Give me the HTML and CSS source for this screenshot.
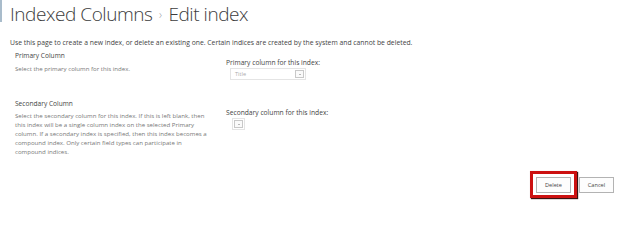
FILE: index.html
```html
<!DOCTYPE html>
<html lang="en">
<head>
<meta charset="utf-8">
<title>Indexed Columns - Edit index</title>
<link rel="stylesheet" href="styles.css">
</head>
<body>
<div class="page">
  <header class="header">
    <h1 class="title">Indexed Columns <span class="sep">›</span> Edit index</h1>
  </header>
  <main class="content">
    <p class="intro">Use this page to create a new index, or delete an existing one. Certain indices are created by the system and cannot be deleted.</p>

    <section class="row row-primary">
      <div class="info">
        <h2 class="info-title">Primary Column</h2>
        <p class="info-desc">Select the primary column for this index.</p>
      </div>
      <div class="field">
        <label class="field-label">Primary column for this index:</label>
        <div class="select select-wide">
          <span class="select-value">Title</span>
          <span class="select-arrow"><span class="tri"></span></span>
        </div>
      </div>
    </section>

    <section class="row row-secondary">
      <div class="info">
        <h2 class="info-title">Secondary Column</h2>
        <p class="info-desc">Select the secondary column for this index. If this is left blank, then this index will be a single column index on the selected Primary column. If a secondary index is specified, then this index becomes a compound index. Only certain field types can participate in compound indices.</p>
      </div>
      <div class="field">
        <label class="field-label">Secondary column for this index:</label>
        <div class="select select-small">
          <span class="select-arrow"><span class="tri"></span></span>
        </div>
      </div>
    </section>

    <div class="actions">
      <span class="highlight"><button class="btn">Delete</button></span>
      <button class="btn">Cancel</button>
    </div>
  </main>
</div>
</body>
</html>
```
FILE: styles.css
```css
* { box-sizing: border-box; }
html, body { margin: 0; padding: 0; background: #fff; }
body {
  font-family: "Open Sans", "Noto Sans", "DejaVu Sans", sans-serif;
  color: #444;
  width: 624px;
  height: 213px;
  overflow: hidden;
}
.page { width: 624px; }

.header {
  height: 22px;
  border-left: 2px solid #a9bccb;
  padding-left: 8px;
}
.title {
  margin: 0;
  padding-top: 2px;
  font-size: 19px;
  letter-spacing: -0.45px;
  line-height: 24px;
  font-weight: 300;
  color: #3c3c3c;
  white-space: nowrap;
}
.sep { font-size: 12px; color: #999; vertical-align: 2px; padding: 0 2px; letter-spacing: 0; }

.content { padding-left: 10px; }

.intro {
  margin: 17px 0 0 0;
  font-size: 6.8px;
  line-height: 8px;
  color: #444;
  white-space: nowrap;
}

.row { display: flex; }
.info { width: 216px; padding-left: 5px; }

.row-primary { margin-top: 3.5px; height: 48px; }

.info-title {
  margin: 0;
  font-size: 6.6px;
  line-height: 9px;
  font-weight: 400;
  color: #444;
}
.info-desc {
  margin: 4px 0 0 0;
  max-width: 198px;
  font-size: 6.1px;
  line-height: 9px;
  color: #777;
}
.row-secondary .info-desc { margin-top: 3px; }

.field-label {
  display: block;
  font-size: 6.7px;
  line-height: 9px;
  color: #444;
  margin-top: 7px;
}
.row-secondary .field-label { margin-top: 9px; }

.select {
  display: flex;
  align-items: center;
  justify-content: space-between;
  border: 1px solid #e4e4e4;
  background: #fff;
}
.select-wide {
  width: 76px;
  height: 12px;
  margin: 1.5px 0 0 4px;
  padding: 0 1px 0 4px;
}
.select-small {
  width: 13px;
  height: 12px;
  margin: 1.5px 0 0 6px;
  padding: 0 1px;
  justify-content: flex-end;
}
.select-value { font-size: 5.6px; color: #aaa; line-height: 8px; }
.select-arrow {
  width: 9px;
  height: 8px;
  border: 1px solid #c8c8c8;
  background: #fafafa;
  display: flex;
  align-items: center;
  justify-content: center;
}
.tri {
  width: 0; height: 0;
  border-left: 1.5px solid transparent;
  border-right: 1.5px solid transparent;
  border-top: 1.5px solid #777;
}

.actions {
  display: flex;
  justify-content: flex-end;
  align-items: center;
  gap: 2px;
  padding-right: 10px;
  margin-top: 15.5px;
}
.highlight {
  display: inline-flex;
  border: 3px solid #cc1010;
  padding: 2.5px 3px;
  box-shadow: 1px 1px 1px #3a1010, -0.5px -0.5px 0.5px #5a2020;
}
.btn {
  font-family: inherit;
  font-size: 5.6px;
  color: #444;
  background: #fdfdfd;
  border: 1px solid #b3b3b3;
  height: 16px;
  width: 35px;
  padding: 0;
  margin: 0;
  line-height: 14px;
}
```
